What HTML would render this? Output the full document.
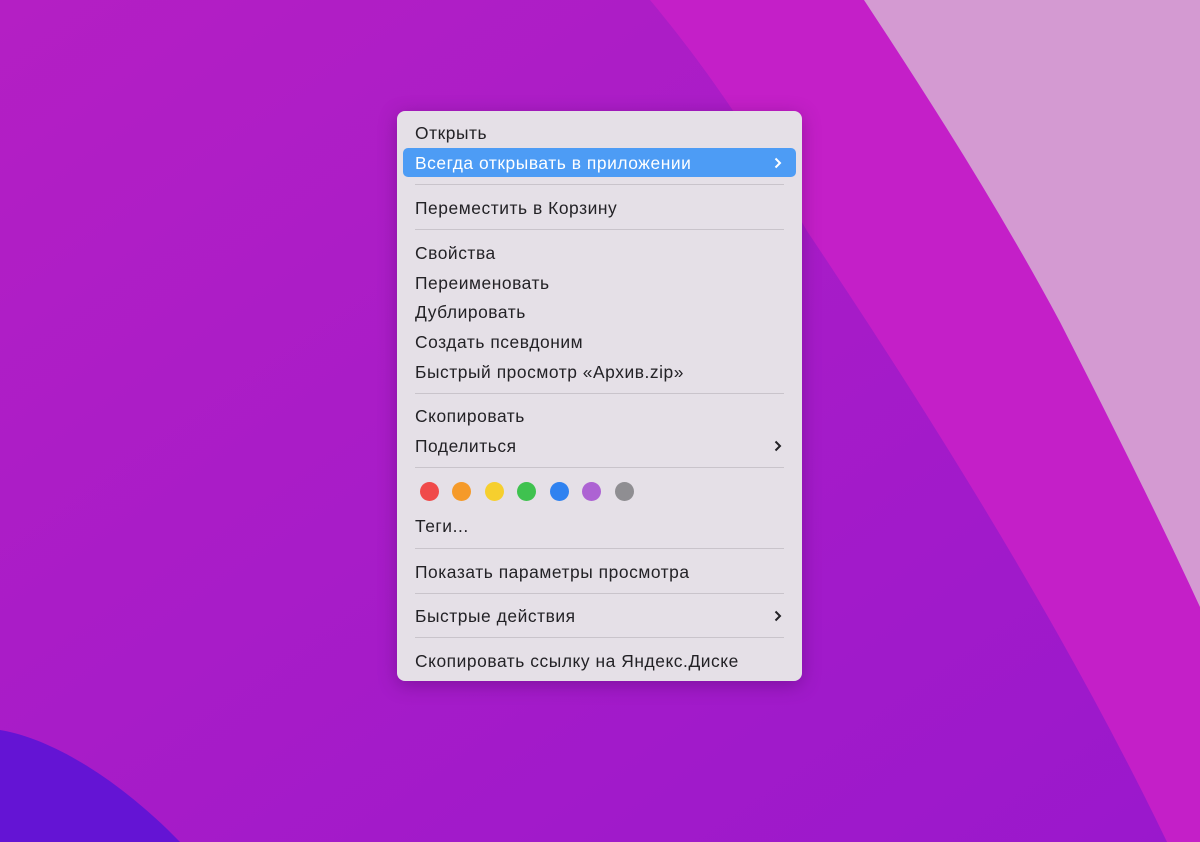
<!DOCTYPE html>
<html><head><meta charset="utf-8"><style>
body{margin:0;width:1200px;height:842px;overflow:hidden;position:relative;font-family:"Liberation Sans",sans-serif}
svg.bg{position:absolute;left:0;top:0}
.menu{position:absolute;left:397px;top:111px;width:405px;height:570px;background:#e5e0e7;border-radius:8px;box-shadow:0 4px 18px rgba(60,0,80,.35)}
.it{position:absolute;left:18px;font-size:17.4px;letter-spacing:0.55px;color:#232226;line-height:20px}
.hl{position:absolute;left:6px;top:37px;width:393px;height:29px;background:#4d9cf5;border-radius:5px}
.sep{position:absolute;left:18px;width:369px;height:1px;background:#c9c4cb}
.ch{position:absolute;right:20px;width:8px;height:12px}
.dot{position:absolute;top:371px;width:19px;height:19px;border-radius:50%}
</style></head><body>
<svg class="bg" width="1200" height="842">
<defs>
<linearGradient id="g1" x1="0" y1="0" x2="1" y2="1"><stop offset="0" stop-color="#b41fc4"/><stop offset="1" stop-color="#9a18cc"/></linearGradient>
</defs>
<rect width="1200" height="842" fill="url(#g1)"/>
<path d="M650 0 C700 60 750 130 807 231 C920 400 1060 620 1167 842 L1200 842 L1200 0Z" fill="#c41fc8"/>
<path d="M864 0 C930 100 1000 210 1060 322 C1110 420 1160 520 1200 607 L1200 0Z" fill="#d49ad2"/>
<path d="M0 730 C60 740 130 790 180 842 L0 842Z" fill="#6414d4"/>
</svg>
<div class="menu">
<div class="it" style="top:12px">Открыть</div>
<div class="hl"></div>
<div class="it" style="top:42px;color:#fff">Всегда открывать в приложении</div>
<svg class="ch" style="top:46px" viewBox="0 0 8 12"><path d="M1.5 1.5 L6 6 L1.5 10.5" fill="none" stroke="#fff" stroke-width="2"/></svg>
<div class="sep" style="top:73px"></div>
<div class="it" style="top:87px">Переместить в Корзину</div>
<div class="sep" style="top:118px"></div>
<div class="it" style="top:132px">Свойства</div>
<div class="it" style="top:162px">Переименовать</div>
<div class="it" style="top:191px">Дублировать</div>
<div class="it" style="top:221px">Создать псевдоним</div>
<div class="it" style="top:251px">Быстрый просмотр «Архив.zip»</div>
<div class="sep" style="top:282px"></div>
<div class="it" style="top:295px">Скопировать</div>
<div class="it" style="top:325px">Поделиться</div>
<svg class="ch" style="top:329px" viewBox="0 0 8 12"><path d="M1.5 1.5 L6 6 L1.5 10.5" fill="none" stroke="#232226" stroke-width="2"/></svg>
<div class="sep" style="top:356px"></div>
<div class="dot" style="left:23px;background:#f04a4a"></div>
<div class="dot" style="left:55px;background:#f59a2a"></div>
<div class="dot" style="left:88px;background:#f6cf2e"></div>
<div class="dot" style="left:120px;background:#3fc24f"></div>
<div class="dot" style="left:153px;background:#2f82f0"></div>
<div class="dot" style="left:185px;background:#ad63d3"></div>
<div class="dot" style="left:218px;background:#8f8e92"></div>
<div class="it" style="top:405px">Теги...</div>
<div class="sep" style="top:437px"></div>
<div class="it" style="top:451px">Показать параметры просмотра</div>
<div class="sep" style="top:482px"></div>
<div class="it" style="top:495px">Быстрые действия</div>
<svg class="ch" style="top:499px" viewBox="0 0 8 12"><path d="M1.5 1.5 L6 6 L1.5 10.5" fill="none" stroke="#232226" stroke-width="2"/></svg>
<div class="sep" style="top:526px"></div>
<div class="it" style="top:540px">Скопировать ссылку на Яндекс.Диске</div>
</div>
</body></html>
